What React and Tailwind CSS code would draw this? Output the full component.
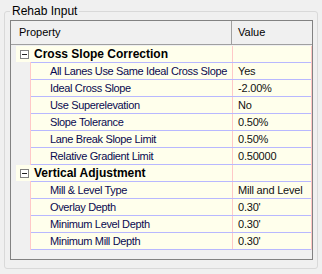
import React from "react";

const cats = [
  {
    title: "Cross Slope Correction",
    rows: [
      ["All Lanes Use Same Ideal Cross Slope", "Yes"],
      ["Ideal Cross Slope", "-2.00%"],
      ["Use Superelevation", "No"],
      ["Slope Tolerance", "0.50%"],
      ["Lane Break Slope Limit", "0.50%"],
      ["Relative Gradient Limit", "0.50000"],
    ],
  },
  {
    title: "Vertical Adjustment",
    rows: [
      ["Mill & Level Type", "Mill and Level"],
      ["Overlay Depth", "0.30'"],
      ["Minimum Level Depth", "0.30'"],
      ["Minimum Mill Depth", "0.30'"],
    ],
  },
];

function CatRow({ title }) {
  return (
    <div>
      <div className="flex h-[16px]">
        <div className="w-[5px] bg-[#f0f0f0]" />
        <div className="w-[216px] bg-[#ffffec] flex items-center">
          <div className="ml-[4px] w-[9px] h-[9px] border border-[#808080] bg-white flex items-center justify-center">
            <div className="w-[5px] h-[1px] bg-[#202020]" />
          </div>
          <span className="ml-[5px] font-bold text-[12px] text-black leading-none whitespace-nowrap">{title}</span>
        </div>
        <div className="w-[1px] bg-[#ffc8c8]" />
        <div className="w-[78px] bg-[#ffffec]" />
        <div className="w-[1px] bg-[#ffc8c8]" />
      </div>
      <div className="flex h-[1px]">
        <div className="w-[19px] bg-[#f0f0f0]" />
        <div className="w-[1px] bg-[#ffc8c8]" />
        <div className="w-[280px] bg-[#b8b8ff]" />
        <div className="w-[1px] bg-[#ffc8c8]" />
      </div>
    </div>
  );
}

function PropRow({ name, value }) {
  return (
    <div>
      <div className="flex h-[16px]">
        <div className="w-[19px] bg-[#f0f0f0]" />
        <div className="w-[1px] bg-[#ffc8c8]" />
        <div className="w-[201px] bg-[#ffffec] pl-[19px] flex items-center text-[#0a0a50] tracking-[-0.35px] whitespace-nowrap overflow-hidden leading-none">
          {name}
        </div>
        <div className="w-[1px] bg-[#ffc8c8]" />
        <div className="w-[78px] bg-[#ffffec] pl-[5px] flex items-center text-[#111111] tracking-[-0.2px] whitespace-nowrap overflow-hidden leading-none">
          {value}
        </div>
        <div className="w-[1px] bg-[#ffc8c8]" />
      </div>
      <div className="flex h-[1px]">
        <div className="w-[19px] bg-[#f0f0f0]" />
        <div className="w-[1px] bg-[#ffc8c8]" />
        <div className="w-[280px] bg-[#b8b8ff]" />
        <div className="w-[1px] bg-[#ffc8c8]" />
      </div>
    </div>
  );
}

export default function App() {
  return (
    <div className="w-[322px] h-[274px] bg-[#f0f0f0] pt-[11px] px-[4px] font-['Liberation_Sans',Arial,sans-serif] text-[11px]">
      <div className="relative h-[258px] border border-[#d9d9d9] rounded-[3px] pt-[8px] pl-[5px] pr-[4px]">
        <div className="absolute left-[5px] top-[-8px] px-[2px] bg-[#f0f0f0] text-[12px] leading-[14px] text-black">
          Rehab Input
        </div>
        <div className="h-[240px] border border-[#828282] bg-[#f0f0f0]">
          <div className="flex h-[24px] border-b border-[#a0a0a0] bg-[#f0f0f0] text-black text-[11px]">
            <div className="w-[221px] pl-[8px] flex items-center border-r border-[#a0a0a0]">Property</div>
            <div className="flex-1 pl-[6px] flex items-center">Value</div>
          </div>
          <div className="h-[1px]" />
          {cats.map((c) => (
            <div key={c.title}>
              <CatRow title={c.title} />
              {c.rows.map(([n, v]) => (
                <PropRow key={n} name={n} value={v} />
              ))}
            </div>
          ))}
        </div>
      </div>
    </div>
  );
}
